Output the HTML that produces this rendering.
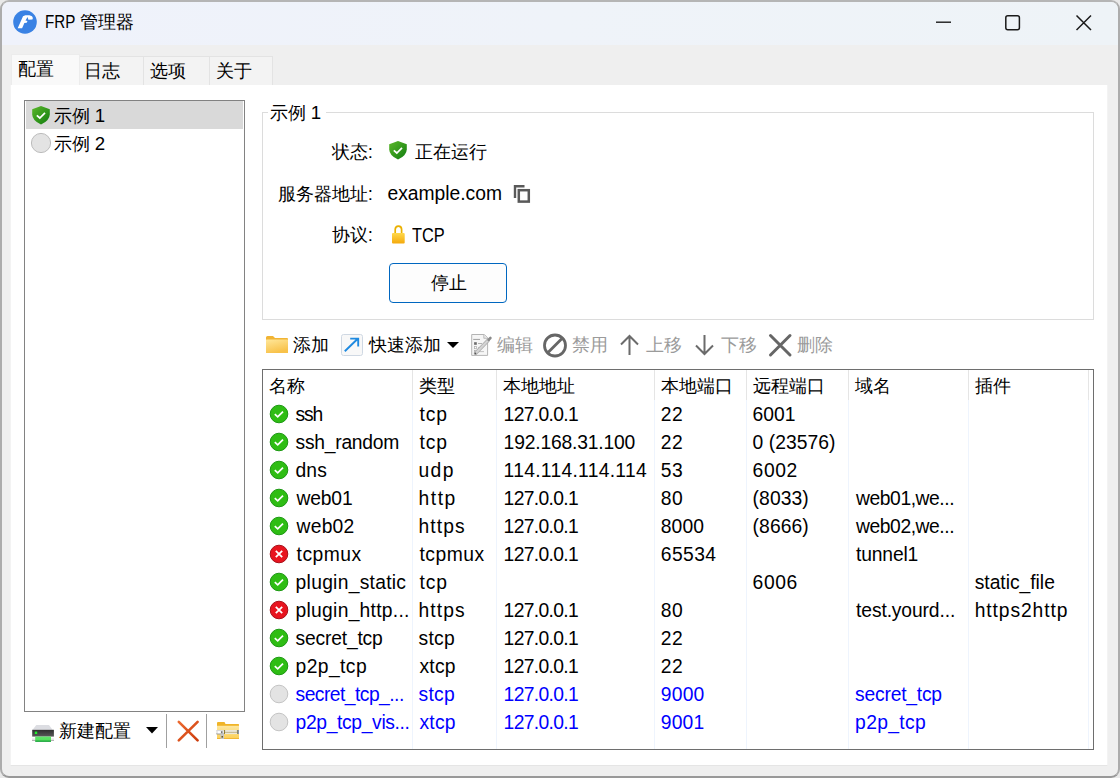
<!DOCTYPE html>
<html><head><meta charset="utf-8"><style>
html,body{margin:0;padding:0;width:1120px;height:778px;overflow:hidden;background:#e9e9e9}
body>div,body>svg{position:absolute}
div{position:absolute}
.t{white-space:nowrap;font-family:"Liberation Sans",sans-serif}
.c{font-size:18px;display:inline-block;width:18px;text-align:center}
</style></head><body>
<div style="left:0;top:0;width:1120px;height:778px;background:#e9e9e9"></div>
<div style="left:0;top:0;width:1116px;height:774px;border:2px solid #acacac;border-top-color:#b5b5b5;border-bottom-color:#999;border-radius:9px;background:#efefef;overflow:hidden"><div style="position:absolute;left:0;top:0;width:1116px;height:43px;background:linear-gradient(90deg,#eff2fb,#eff3f9 50%,#eef3f7)"></div></div>
<svg style="position:absolute;left:12px;top:10px" width="26" height="24" viewBox="0 0 26 24"><circle cx="13" cy="12" r="11.8" fill="#3a82e4"/><path d="M5.7 18.3 L10.1 18.3 L12.4 13 L14.7 12.8 L15.5 11 L13.5 10.5 L15.6 7 L16.4 9.8 L20.4 9.5 L20.9 8 L20 6.2 L17.4 5.2 L13.4 5.2 L11 6.3 Z" fill="#fff"/></svg>
<div class="t" style="left:44.8px;top:13.90px;font-size:17.6px;line-height:17.6px;transform:scaleX(0.86);transform-origin:0 0">FRP</div>
<div class="t" style="left:79.5px;top:12.97px;font-size:18.7px;line-height:18.7px;color:#000;"><span class="c">管</span><span class="c">理</span><span class="c">器</span></div>
<svg style="position:absolute;left:930px;top:10px" width="170" height="26" viewBox="0 0 170 26"><line x1="6" y1="12.2" x2="21" y2="12.2" stroke="#1a1a1a" stroke-width="1.4"/><rect x="75.8" y="5.7" width="13.6" height="14" rx="2" fill="none" stroke="#1a1a1a" stroke-width="1.5"/><path d="M146.5 5.5 L161 20 M161 5.5 L146.5 20" stroke="#1a1a1a" stroke-width="1.5"/></svg>
<div style="left:10.5px;top:55.5px;width:262.5px;height:30px;background:#f3f3f3;border:1px solid #e3e3e3;box-sizing:border-box"></div>
<div style="left:143px;top:56px;width:1px;height:29px;background:#e3e3e3"></div>
<div style="left:209px;top:56px;width:1px;height:29px;background:#e3e3e3"></div>
<div style="left:79px;top:56px;width:1px;height:29px;background:#e3e3e3"></div>
<div style="left:10.5px;top:53.5px;width:69px;height:33px;background:#f9f9f9;border:1px solid #ececec;border-bottom:none;box-sizing:border-box"></div>
<div style="left:10px;top:85px;width:1098px;height:681px;background:#fff;border:1px solid #f3f3f3;border-bottom-color:#e5e5e5;border-top:none;box-sizing:border-box"></div>
<div class="t" style="left:17.5px;top:59.97px;font-size:18.7px;line-height:18.7px;color:#000;"><span class="c">配</span><span class="c">置</span></div>
<div class="t" style="left:83.5px;top:62.17px;font-size:18.7px;line-height:18.7px;color:#000;"><span class="c">日</span><span class="c">志</span></div>
<div class="t" style="left:150px;top:62.17px;font-size:18.7px;line-height:18.7px;color:#000;"><span class="c">选</span><span class="c">项</span></div>
<div class="t" style="left:216px;top:62.17px;font-size:18.7px;line-height:18.7px;color:#000;"><span class="c">关</span><span class="c">于</span></div>
<div style="left:24px;top:100px;width:221px;height:612px;border:1px solid #828282;box-sizing:border-box;background:#fff"></div>
<div style="left:26px;top:101px;width:217px;height:28px;background:#d9d9d9"></div>
<svg style="position:absolute;left:31px;top:105px" width="20" height="20" viewBox="0 0 20 20"><defs><linearGradient id="sg" x1="0" y1="0" x2="1" y2="1"><stop offset="0" stop-color="#5cb82a"/><stop offset="1" stop-color="#107c10"/></linearGradient></defs><path d="M10 1 L18.8 4.2 L18.8 9.5 Q18.5 15.8 10 19.5 Q1.5 15.8 1.2 9.5 L1.2 4.2 Z" fill="url(#sg)"/><path d="M5.8 10.3 L8.8 13 L14 7.8" fill="none" stroke="#fff" stroke-width="1.7"/></svg>
<div class="t" style="left:53.5px;top:106.67px;font-size:18.7px;line-height:18.7px;color:#000;"><span class="c">示</span><span class="c">例</span> 1</div>
<svg style="position:absolute;left:30px;top:132px" width="22" height="22" viewBox="0 0 22 22"><circle cx="11" cy="11" r="9.6" fill="#e3e3e3" stroke="#bcbcbc" stroke-width="1"/></svg>
<div class="t" style="left:53.5px;top:134.67px;font-size:18.7px;line-height:18.7px;color:#000;"><span class="c">示</span><span class="c">例</span> 2</div>
<svg style="position:absolute;left:28px;top:718px" width="30" height="28" viewBox="0 0 30 28"><defs><linearGradient id="dg" x1="0" y1="0" x2="0" y2="1"><stop offset="0" stop-color="#2e2e2e"/><stop offset="1" stop-color="#5a5a5a"/></linearGradient><linearGradient id="gg" x1="0" y1="0" x2="0" y2="1"><stop offset="0" stop-color="#5fe86a"/><stop offset="0.55" stop-color="#58e060"/><stop offset="1" stop-color="#0d9a33"/></linearGradient></defs><path d="M8.3 7 L21 7 L24.6 11.8 L4.6 11.8 Z" fill="#dcdde2"/><rect x="4.2" y="11.8" width="21.7" height="6.8" fill="url(#dg)"/><rect x="6.8" y="13.6" width="2.4" height="2.4" fill="#1ef02a"/><rect x="4" y="20.4" width="22" height="2.6" fill="#e6e6e6"/><rect x="4" y="22" width="22" height="1" fill="#b4b4b4"/><rect x="7.2" y="18.6" width="15.8" height="5.3" fill="url(#gg)"/></svg>
<div class="t" style="left:59px;top:721.67px;font-size:18.7px;line-height:18.7px;color:#000;"><span class="c">新</span><span class="c">建</span><span class="c">配</span><span class="c">置</span></div>
<svg style="position:absolute;left:146px;top:727px" width="13" height="7" viewBox="0 0 13 7"><path d="M0 0 L12 0 L6 6.5 Z" fill="#000"/></svg>
<div style="left:166px;top:714px;width:1px;height:34px;background:#a0a0a0"></div>
<svg style="position:absolute;left:175px;top:718px" width="26" height="26" viewBox="0 0 26 26"><defs><linearGradient id="xg" x1="0" y1="0" x2="1" y2="1"><stop offset="0" stop-color="#ec6a30"/><stop offset="1" stop-color="#cc3c0c"/></linearGradient></defs><path d="M3.8 3.8 L22.6 22.4 M22.6 3.8 L3.8 22.4" stroke="url(#xg)" stroke-width="2.6" stroke-linecap="round"/></svg>
<div style="left:206px;top:714px;width:1px;height:34px;background:#a0a0a0"></div>
<svg style="position:absolute;left:212px;top:716px" width="32" height="28" viewBox="0 0 32 28"><defs><linearGradient id="zg" x1="0" y1="0" x2="0" y2="1"><stop offset="0" stop-color="#fde7a0"/><stop offset="1" stop-color="#fbcf55"/></linearGradient><linearGradient id="mg" x1="0" y1="0" x2="0" y2="1"><stop offset="0" stop-color="#d0d0d0"/><stop offset="0.5" stop-color="#f4f4f4"/><stop offset="1" stop-color="#9a9a9a"/></linearGradient></defs><path d="M5 7 Q5 6 6 6 L12.5 6 L13.5 8 L26.5 8 Q27 8 27 9 L27 23 L5 23 Z" fill="#f0b428"/><rect x="5" y="9.8" width="22" height="13.2" fill="url(#zg)"/><rect x="5" y="22.2" width="22" height="0.8" fill="#efb02e"/><rect x="12" y="14" width="14" height="4" fill="#8a7426"/><path d="M13 15.5 L14 14.6 L15 15.5 L16 14.6 L17 15.5 L18 14.6 L19 15.5 L20 14.6 L21 15.5 L22 14.6 L23 15.5 L24 14.6 L25 15.5 M13 16.8 L14 17.5 L15 16.8 L16 17.5 L17 16.8 L18 17.5 L19 16.8 L20 17.5 L21 16.8 L22 17.5 L23 16.8 L24 17.5 L25 16.8" fill="none" stroke="#fff" stroke-width="1.1"/><rect x="25.5" y="14" width="1.5" height="4" fill="#8a96a8"/><rect x="4" y="14" width="8" height="4.5" rx="1" fill="url(#mg)"/><rect x="6" y="15.2" width="2.5" height="2" fill="#fff"/><rect x="9" y="15.2" width="1.5" height="2" fill="#777"/><rect x="8.5" y="18" width="3.5" height="5" fill="#c4c4c4"/><rect x="9.5" y="20" width="1.5" height="1.6" fill="#6b5a20"/></svg>
<div style="left:262px;top:112px;width:832px;height:208px;border:1px solid #dcdcdc;box-sizing:border-box"></div>
<div style="left:268px;top:104px;width:58px;height:14px;background:#fff"></div>
<div class="t" style="left:269.5px;top:103.67px;font-size:18.7px;line-height:18.7px;color:#000;"><span class="c">示</span><span class="c">例</span> 1</div>
<div class="t" style="right:747px;top:142.67px;font-size:18.7px;line-height:18.7px;color:#000;"><span class="c">状</span><span class="c">态</span>:</div>
<svg style="position:absolute;left:388px;top:140px" width="21" height="21" viewBox="0 0 21 21"><defs><linearGradient id="sg2" x1="0" y1="0" x2="1" y2="1"><stop offset="0" stop-color="#5cb82a"/><stop offset="1" stop-color="#107c10"/></linearGradient></defs><path d="M10 1 L18.8 4.2 L18.8 9.5 Q18.5 15.8 10 19.5 Q1.5 15.8 1.2 9.5 L1.2 4.2 Z" fill="url(#sg2)"/><path d="M5.8 10.3 L8.8 13 L14 7.8" fill="none" stroke="#fff" stroke-width="1.7"/></svg>
<div class="t" style="left:415px;top:142.67px;font-size:18.7px;line-height:18.7px;color:#000;"><span class="c">正</span><span class="c">在</span><span class="c">运</span><span class="c">行</span></div>
<div class="t" style="right:747px;top:184.67px;font-size:18.7px;line-height:18.7px;color:#000;"><span class="c">服</span><span class="c">务</span><span class="c">器</span><span class="c">地</span><span class="c">址</span>:</div>
<div class="t" style="left:387.50px;top:183.86px;font-size:19.3px;line-height:19.3px;color:#000;letter-spacing:-0.020px;">example.com</div>
<svg style="position:absolute;left:513px;top:185px" width="18" height="19" viewBox="0 0 18 19"><path d="M2 13 L2 1.3 L11.5 1.3" fill="none" stroke="#595959" stroke-width="2.4"/><rect x="5.8" y="5.2" width="10" height="11.4" fill="none" stroke="#595959" stroke-width="2.5"/></svg>
<div class="t" style="right:747px;top:225.77px;font-size:18.7px;line-height:18.7px;color:#000;"><span class="c">协</span><span class="c">议</span>:</div>
<svg style="position:absolute;left:390px;top:224px" width="17" height="21" viewBox="0 0 17 21"><path d="M5.2 9.5 L5.2 5.6 Q5.2 2.2 8.4 2.2 Q11.6 2.2 11.6 5.6 L11.6 9.5" fill="none" stroke="#eab000" stroke-width="1.7"/><defs><linearGradient id="lg" x1="0" y1="0" x2="0" y2="1"><stop offset="0" stop-color="#ffd84a"/><stop offset="1" stop-color="#f4a90c"/></linearGradient></defs><rect x="2" y="9" width="12.7" height="10.6" rx="1" fill="url(#lg)"/></svg>
<div class="t" style="left:412.3px;top:225.66px;font-size:19.3px;line-height:19.3px;transform:scaleX(0.8500);transform-origin:0 0">TCP</div>
<div style="left:389px;top:263px;width:118px;height:40px;border:1px solid #0067c0;border-radius:4px;box-sizing:border-box;background:#fdfdfd"></div>
<div class="t" style="left:430.5px;top:274.17px;font-size:18.7px;line-height:18.7px;color:#000;"><span class="c">停</span><span class="c">止</span></div>
<svg style="position:absolute;left:265px;top:334px" width="24" height="21" viewBox="0 0 24 21"><defs><linearGradient id="fg" x1="0" y1="0" x2="0.4" y2="1"><stop offset="0" stop-color="#ffe79a"/><stop offset="1" stop-color="#f8c24a"/></linearGradient></defs><path d="M1 3.5 Q1 2 2.5 2 L8 2 L10 4 L22 4 Q23 4 23 5 L23 19 L1 19 Z" fill="#f1b434"/><rect x="1" y="5.5" width="22" height="13.5" rx="0.5" fill="url(#fg)"/></svg>
<div class="t" style="left:293px;top:335.67px;font-size:18.7px;line-height:18.7px;color:#000;"><span class="c">添</span><span class="c">加</span></div>
<svg style="position:absolute;left:341px;top:334px" width="22" height="22" viewBox="0 0 22 22"><rect x="0.5" y="0.5" width="21" height="21" rx="2" fill="#f8f8f8" stroke="#cfd8e3"/><path d="M3.8 17.2 L17 4.5 M9.2 4.6 L17.2 4.6 L17.2 12.4" fill="none" stroke="#1f8ae0" stroke-width="1.9"/></svg>
<div class="t" style="left:368.5px;top:335.67px;font-size:18.7px;line-height:18.7px;color:#000;"><span class="c">快</span><span class="c">速</span><span class="c">添</span><span class="c">加</span></div>
<svg style="position:absolute;left:447px;top:342px" width="13" height="7" viewBox="0 0 13 7"><path d="M0 0 L12 0 L6 6 Z" fill="#000"/></svg>
<svg style="position:absolute;left:466px;top:330px" width="30" height="30" viewBox="0 0 30 30"><path d="M5.7 4.5 L18.3 4.5 L21.6 7.8 L21.6 25.4 L5.7 25.4 Z" fill="#f6f6f6" stroke="#b4b4b4" stroke-width="1"/><path d="M17.8 4.5 L17.8 8.3 L21.6 8.3" fill="#e8e8e8" stroke="#b8b8b8" stroke-width="0.9"/><rect x="7.2" y="8.9" width="6.8" height="1.1" fill="#a8a8a8"/><rect x="8.1" y="12.2" width="2.7" height="2.6" fill="#6e6e6e"/><rect x="12" y="13.1" width="4" height="0.9" fill="#aaa"/><rect x="8.4" y="16.5" width="2.2" height="2.2" fill="#fff" stroke="#aaa" stroke-width="0.7"/><rect x="12" y="17.2" width="4" height="0.9" fill="#bbb"/><rect x="8.4" y="20.6" width="2.2" height="2.2" fill="#fff" stroke="#aaa" stroke-width="0.7"/><rect x="12" y="21.2" width="6" height="0.9" fill="#bbb"/><path d="M9.6 23.2 L22.2 10.2" stroke="#acacac" stroke-width="3.6" stroke-linecap="round"/><path d="M9.6 23.2 L22.2 10.2" stroke="#d4d4d4" stroke-width="2" stroke-linecap="round"/><path d="M22.6 9.8 L24.4 8" stroke="#8a8a8a" stroke-width="2.6" stroke-linecap="round"/><circle cx="9.4" cy="23.4" r="0.9" fill="#555"/></svg>
<div class="t" style="left:497px;top:335.67px;font-size:18.7px;line-height:18.7px;color:#9b9b9b;"><span class="c">编</span><span class="c">辑</span></div>
<svg style="position:absolute;left:542px;top:333px" width="26" height="25" viewBox="0 0 26 25"><circle cx="13" cy="12.5" r="10.5" fill="none" stroke="#666" stroke-width="2.8"/><line x1="6" y1="19.5" x2="20" y2="5.5" stroke="#666" stroke-width="2.8"/></svg>
<div class="t" style="left:571.5px;top:335.67px;font-size:18.7px;line-height:18.7px;color:#9b9b9b;"><span class="c">禁</span><span class="c">用</span></div>
<svg style="position:absolute;left:619px;top:334px" width="21" height="22" viewBox="0 0 21 22"><path d="M10.5 21 L10.5 2.5 M2 10.5 L10.5 2 L19 10.5" fill="none" stroke="#6b6b6b" stroke-width="2"/></svg>
<div class="t" style="left:646px;top:335.67px;font-size:18.7px;line-height:18.7px;color:#9b9b9b;"><span class="c">上</span><span class="c">移</span></div>
<svg style="position:absolute;left:694px;top:334px" width="21" height="22" viewBox="0 0 21 22"><path d="M10.5 1 L10.5 19.5 M2 11.5 L10.5 20 L19 11.5" fill="none" stroke="#6b6b6b" stroke-width="2"/></svg>
<div class="t" style="left:721px;top:335.67px;font-size:18.7px;line-height:18.7px;color:#9b9b9b;"><span class="c">下</span><span class="c">移</span></div>
<svg style="position:absolute;left:768px;top:333px" width="25" height="25" viewBox="0 0 25 25"><path d="M2.5 2.5 L22 22 M22 2.5 L2.5 22" stroke="#666" stroke-width="3" stroke-linecap="round"/></svg>
<div class="t" style="left:797px;top:335.67px;font-size:18.7px;line-height:18.7px;color:#9b9b9b;"><span class="c">删</span><span class="c">除</span></div>
<div style="left:262px;top:369px;width:832px;height:381px;border:1px solid #6e6e6e;box-sizing:border-box;background:#fff"></div>
<div style="left:412.0px;top:370px;width:1px;height:30px;background:#e5e5e5"></div>
<div style="left:412.0px;top:400px;width:1px;height:349px;background:#eef4fd"></div>
<div style="left:496.0px;top:370px;width:1px;height:30px;background:#e5e5e5"></div>
<div style="left:496.0px;top:400px;width:1px;height:349px;background:#eef4fd"></div>
<div style="left:654.0px;top:370px;width:1px;height:30px;background:#e5e5e5"></div>
<div style="left:654.0px;top:400px;width:1px;height:349px;background:#eef4fd"></div>
<div style="left:746.0px;top:370px;width:1px;height:30px;background:#e5e5e5"></div>
<div style="left:746.0px;top:400px;width:1px;height:349px;background:#eef4fd"></div>
<div style="left:848.0px;top:370px;width:1px;height:30px;background:#e5e5e5"></div>
<div style="left:848.0px;top:400px;width:1px;height:349px;background:#eef4fd"></div>
<div style="left:968.0px;top:370px;width:1px;height:30px;background:#e5e5e5"></div>
<div style="left:968.0px;top:400px;width:1px;height:349px;background:#eef4fd"></div>
<div style="left:1088.0px;top:370px;width:1px;height:30px;background:#e5e5e5"></div>
<div style="left:1088.0px;top:400px;width:1px;height:349px;background:#eef4fd"></div>
<div class="t" style="left:268.8px;top:376.67px;font-size:18.7px;line-height:18.7px;color:#000;"><span class="c">名</span><span class="c">称</span></div>
<div class="t" style="left:418.5px;top:376.67px;font-size:18.7px;line-height:18.7px;color:#000;"><span class="c">类</span><span class="c">型</span></div>
<div class="t" style="left:502.5px;top:376.67px;font-size:18.7px;line-height:18.7px;color:#000;"><span class="c">本</span><span class="c">地</span><span class="c">地</span><span class="c">址</span></div>
<div class="t" style="left:660.5px;top:376.67px;font-size:18.7px;line-height:18.7px;color:#000;"><span class="c">本</span><span class="c">地</span><span class="c">端</span><span class="c">口</span></div>
<div class="t" style="left:752.5px;top:376.67px;font-size:18.7px;line-height:18.7px;color:#000;"><span class="c">远</span><span class="c">程</span><span class="c">端</span><span class="c">口</span></div>
<div class="t" style="left:854.5px;top:376.67px;font-size:18.7px;line-height:18.7px;color:#000;"><span class="c">域</span><span class="c">名</span></div>
<div class="t" style="left:974.5px;top:376.67px;font-size:18.7px;line-height:18.7px;color:#000;"><span class="c">插</span><span class="c">件</span></div>
<svg style="position:absolute;left:269px;top:404px" width="20" height="20" viewBox="0 0 20 20"><circle cx="10" cy="10" r="8.8" fill="#2fbd14" stroke="#1c9812" stroke-width="1"/><path d="M5.8 10.2 L8.7 12.8 L14 7.6" fill="none" stroke="#fff" stroke-width="1.8"/></svg>
<div class="t" style="left:295.60px;top:404.66px;font-size:19.3px;line-height:19.3px;color:#000;letter-spacing:-1.150px;">ssh</div>
<div class="t" style="left:419.50px;top:404.66px;font-size:19.3px;line-height:19.3px;color:#000;letter-spacing:0.900px;">tcp</div>
<div class="t" style="left:503.60px;top:404.66px;font-size:19.3px;line-height:19.3px;color:#000;letter-spacing:-0.650px;">127.0.0.1</div>
<div class="t" style="left:660.80px;top:404.66px;font-size:19.3px;line-height:19.3px;color:#000;letter-spacing:0.600px;">22</div>
<div class="t" style="left:752.60px;top:404.66px;font-size:19.3px;line-height:19.3px;color:#000;letter-spacing:-0.033px;">6001</div>
<svg style="position:absolute;left:269px;top:432px" width="20" height="20" viewBox="0 0 20 20"><circle cx="10" cy="10" r="8.8" fill="#2fbd14" stroke="#1c9812" stroke-width="1"/><path d="M5.8 10.2 L8.7 12.8 L14 7.6" fill="none" stroke="#fff" stroke-width="1.8"/></svg>
<div class="t" style="left:295.60px;top:432.66px;font-size:19.3px;line-height:19.3px;color:#000;letter-spacing:-0.267px;">ssh_random</div>
<div class="t" style="left:419.50px;top:432.66px;font-size:19.3px;line-height:19.3px;color:#000;letter-spacing:0.900px;">tcp</div>
<div class="t" style="left:503.60px;top:432.66px;font-size:19.3px;line-height:19.3px;color:#000;letter-spacing:-0.177px;">192.168.31.100</div>
<div class="t" style="left:660.80px;top:432.66px;font-size:19.3px;line-height:19.3px;color:#000;letter-spacing:0.600px;">22</div>
<div class="t" style="left:752.60px;top:432.66px;font-size:19.3px;line-height:19.3px;color:#000;letter-spacing:0.050px;">0 (23576)</div>
<svg style="position:absolute;left:269px;top:460px" width="20" height="20" viewBox="0 0 20 20"><circle cx="10" cy="10" r="8.8" fill="#2fbd14" stroke="#1c9812" stroke-width="1"/><path d="M5.8 10.2 L8.7 12.8 L14 7.6" fill="none" stroke="#fff" stroke-width="1.8"/></svg>
<div class="t" style="left:295.60px;top:460.66px;font-size:19.3px;line-height:19.3px;color:#000;letter-spacing:0.050px;">dns</div>
<div class="t" style="left:418.50px;top:460.66px;font-size:19.3px;line-height:19.3px;color:#000;letter-spacing:1.400px;">udp</div>
<div class="t" style="left:503.60px;top:460.66px;font-size:19.3px;line-height:19.3px;color:#000;letter-spacing:0.286px;">114.114.114.114</div>
<div class="t" style="left:660.80px;top:460.66px;font-size:19.3px;line-height:19.3px;color:#000;letter-spacing:0.600px;">53</div>
<div class="t" style="left:752.60px;top:460.66px;font-size:19.3px;line-height:19.3px;color:#000;letter-spacing:0.567px;">6002</div>
<svg style="position:absolute;left:269px;top:488px" width="20" height="20" viewBox="0 0 20 20"><circle cx="10" cy="10" r="8.8" fill="#2fbd14" stroke="#1c9812" stroke-width="1"/><path d="M5.8 10.2 L8.7 12.8 L14 7.6" fill="none" stroke="#fff" stroke-width="1.8"/></svg>
<div class="t" style="left:296.60px;top:488.66px;font-size:19.3px;line-height:19.3px;color:#000;letter-spacing:-0.200px;">web01</div>
<div class="t" style="left:418.50px;top:488.66px;font-size:19.3px;line-height:19.3px;color:#000;letter-spacing:1.533px;">http</div>
<div class="t" style="left:503.60px;top:488.66px;font-size:19.3px;line-height:19.3px;color:#000;letter-spacing:-0.650px;">127.0.0.1</div>
<div class="t" style="left:660.80px;top:488.66px;font-size:19.3px;line-height:19.3px;color:#000;letter-spacing:0.600px;">80</div>
<div class="t" style="left:752.60px;top:488.66px;font-size:19.3px;line-height:19.3px;color:#000;letter-spacing:0.080px;">(8033)</div>
<div class="t" style="left:856.10px;top:488.66px;font-size:19.3px;line-height:19.3px;color:#000;letter-spacing:-0.450px;">web01,we...</div>
<svg style="position:absolute;left:269px;top:516px" width="20" height="20" viewBox="0 0 20 20"><circle cx="10" cy="10" r="8.8" fill="#2fbd14" stroke="#1c9812" stroke-width="1"/><path d="M5.8 10.2 L8.7 12.8 L14 7.6" fill="none" stroke="#fff" stroke-width="1.8"/></svg>
<div class="t" style="left:296.60px;top:516.66px;font-size:19.3px;line-height:19.3px;color:#000;letter-spacing:0.200px;">web02</div>
<div class="t" style="left:418.50px;top:516.66px;font-size:19.3px;line-height:19.3px;color:#000;letter-spacing:1.075px;">https</div>
<div class="t" style="left:503.60px;top:516.66px;font-size:19.3px;line-height:19.3px;color:#000;letter-spacing:-0.650px;">127.0.0.1</div>
<div class="t" style="left:660.80px;top:516.66px;font-size:19.3px;line-height:19.3px;color:#000;letter-spacing:0.067px;">8000</div>
<div class="t" style="left:752.60px;top:516.66px;font-size:19.3px;line-height:19.3px;color:#000;letter-spacing:0.080px;">(8666)</div>
<div class="t" style="left:856.10px;top:516.66px;font-size:19.3px;line-height:19.3px;color:#000;letter-spacing:-0.450px;">web02,we...</div>
<svg style="position:absolute;left:269px;top:544px" width="20" height="20" viewBox="0 0 20 20"><circle cx="10" cy="10" r="8.8" fill="#e8141f" stroke="#a80f18" stroke-width="1"/><path d="M6.8 6.8 L13.2 13.2 M13.2 6.8 L6.8 13.2" fill="none" stroke="#fff" stroke-width="1.8"/></svg>
<div class="t" style="left:296.60px;top:544.66px;font-size:19.3px;line-height:19.3px;color:#000;letter-spacing:0.480px;">tcpmux</div>
<div class="t" style="left:419.50px;top:544.66px;font-size:19.3px;line-height:19.3px;color:#000;letter-spacing:0.480px;">tcpmux</div>
<div class="t" style="left:503.60px;top:544.66px;font-size:19.3px;line-height:19.3px;color:#000;letter-spacing:-0.650px;">127.0.0.1</div>
<div class="t" style="left:660.80px;top:544.66px;font-size:19.3px;line-height:19.3px;color:#000;letter-spacing:0.400px;">65534</div>
<div class="t" style="left:856.10px;top:544.66px;font-size:19.3px;line-height:19.3px;color:#000;letter-spacing:-0.183px;">tunnel1</div>
<svg style="position:absolute;left:269px;top:572px" width="20" height="20" viewBox="0 0 20 20"><circle cx="10" cy="10" r="8.8" fill="#2fbd14" stroke="#1c9812" stroke-width="1"/><path d="M5.8 10.2 L8.7 12.8 L14 7.6" fill="none" stroke="#fff" stroke-width="1.8"/></svg>
<div class="t" style="left:295.60px;top:572.66px;font-size:19.3px;line-height:19.3px;color:#000;letter-spacing:0.267px;">plugin_static</div>
<div class="t" style="left:419.50px;top:572.66px;font-size:19.3px;line-height:19.3px;color:#000;letter-spacing:0.900px;">tcp</div>
<div class="t" style="left:752.60px;top:572.66px;font-size:19.3px;line-height:19.3px;color:#000;letter-spacing:0.600px;">6006</div>
<div class="t" style="left:974.70px;top:572.66px;font-size:19.3px;line-height:19.3px;color:#000;letter-spacing:-0.020px;">static_file</div>
<svg style="position:absolute;left:269px;top:600px" width="20" height="20" viewBox="0 0 20 20"><circle cx="10" cy="10" r="8.8" fill="#e8141f" stroke="#a80f18" stroke-width="1"/><path d="M6.8 6.8 L13.2 13.2 M13.2 6.8 L6.8 13.2" fill="none" stroke="#fff" stroke-width="1.8"/></svg>
<div class="t" style="left:295.60px;top:600.66px;font-size:19.3px;line-height:19.3px;color:#000;letter-spacing:0.262px;">plugin_http...</div>
<div class="t" style="left:418.50px;top:600.66px;font-size:19.3px;line-height:19.3px;color:#000;letter-spacing:1.075px;">https</div>
<div class="t" style="left:503.60px;top:600.66px;font-size:19.3px;line-height:19.3px;color:#000;letter-spacing:-0.650px;">127.0.0.1</div>
<div class="t" style="left:660.80px;top:600.66px;font-size:19.3px;line-height:19.3px;color:#000;letter-spacing:0.600px;">80</div>
<div class="t" style="left:856.10px;top:600.66px;font-size:19.3px;line-height:19.3px;color:#000;letter-spacing:-0.133px;">test.yourd...</div>
<div class="t" style="left:974.70px;top:600.66px;font-size:19.3px;line-height:19.3px;color:#000;letter-spacing:0.900px;">https2http</div>
<svg style="position:absolute;left:269px;top:628px" width="20" height="20" viewBox="0 0 20 20"><circle cx="10" cy="10" r="8.8" fill="#2fbd14" stroke="#1c9812" stroke-width="1"/><path d="M5.8 10.2 L8.7 12.8 L14 7.6" fill="none" stroke="#fff" stroke-width="1.8"/></svg>
<div class="t" style="left:295.60px;top:628.66px;font-size:19.3px;line-height:19.3px;color:#000;letter-spacing:-0.200px;">secret_tcp</div>
<div class="t" style="left:418.50px;top:628.66px;font-size:19.3px;line-height:19.3px;color:#000;letter-spacing:0.300px;">stcp</div>
<div class="t" style="left:503.60px;top:628.66px;font-size:19.3px;line-height:19.3px;color:#000;letter-spacing:-0.650px;">127.0.0.1</div>
<div class="t" style="left:660.80px;top:628.66px;font-size:19.3px;line-height:19.3px;color:#000;letter-spacing:0.600px;">22</div>
<svg style="position:absolute;left:269px;top:656px" width="20" height="20" viewBox="0 0 20 20"><circle cx="10" cy="10" r="8.8" fill="#2fbd14" stroke="#1c9812" stroke-width="1"/><path d="M5.8 10.2 L8.7 12.8 L14 7.6" fill="none" stroke="#fff" stroke-width="1.8"/></svg>
<div class="t" style="left:295.60px;top:656.66px;font-size:19.3px;line-height:19.3px;color:#000;letter-spacing:0.400px;">p2p_tcp</div>
<div class="t" style="left:419.50px;top:656.66px;font-size:19.3px;line-height:19.3px;color:#000;letter-spacing:0.200px;">xtcp</div>
<div class="t" style="left:503.60px;top:656.66px;font-size:19.3px;line-height:19.3px;color:#000;letter-spacing:-0.650px;">127.0.0.1</div>
<div class="t" style="left:660.80px;top:656.66px;font-size:19.3px;line-height:19.3px;color:#000;letter-spacing:0.600px;">22</div>
<svg style="position:absolute;left:269px;top:684px" width="20" height="20" viewBox="0 0 20 20"><circle cx="10" cy="10" r="8.8" fill="#e3e3e3" stroke="#c4c4c4" stroke-width="1"/></svg>
<div class="t" style="left:295.60px;top:684.66px;font-size:19.3px;line-height:19.3px;color:#0000ff;letter-spacing:-0.546px;">secret_tcp_...</div>
<div class="t" style="left:418.50px;top:684.66px;font-size:19.3px;line-height:19.3px;color:#0000ff;letter-spacing:0.300px;">stcp</div>
<div class="t" style="left:503.60px;top:684.66px;font-size:19.3px;line-height:19.3px;color:#0000ff;letter-spacing:-0.650px;">127.0.0.1</div>
<div class="t" style="left:660.80px;top:684.66px;font-size:19.3px;line-height:19.3px;color:#0000ff;letter-spacing:0.200px;">9000</div>
<div class="t" style="left:855.10px;top:684.66px;font-size:19.3px;line-height:19.3px;color:#0000ff;letter-spacing:-0.222px;">secret_tcp</div>
<svg style="position:absolute;left:269px;top:712px" width="20" height="20" viewBox="0 0 20 20"><circle cx="10" cy="10" r="8.8" fill="#e3e3e3" stroke="#c4c4c4" stroke-width="1"/></svg>
<div class="t" style="left:295.60px;top:712.66px;font-size:19.3px;line-height:19.3px;color:#0000ff;letter-spacing:-0.354px;">p2p_tcp_vis...</div>
<div class="t" style="left:419.50px;top:712.66px;font-size:19.3px;line-height:19.3px;color:#0000ff;letter-spacing:0.200px;">xtcp</div>
<div class="t" style="left:503.60px;top:712.66px;font-size:19.3px;line-height:19.3px;color:#0000ff;letter-spacing:-0.650px;">127.0.0.1</div>
<div class="t" style="left:660.80px;top:712.66px;font-size:19.3px;line-height:19.3px;color:#0000ff;letter-spacing:0.167px;">9001</div>
<div class="t" style="left:855.10px;top:712.66px;font-size:19.3px;line-height:19.3px;color:#0000ff;letter-spacing:0.317px;">p2p_tcp</div>
</body></html>
